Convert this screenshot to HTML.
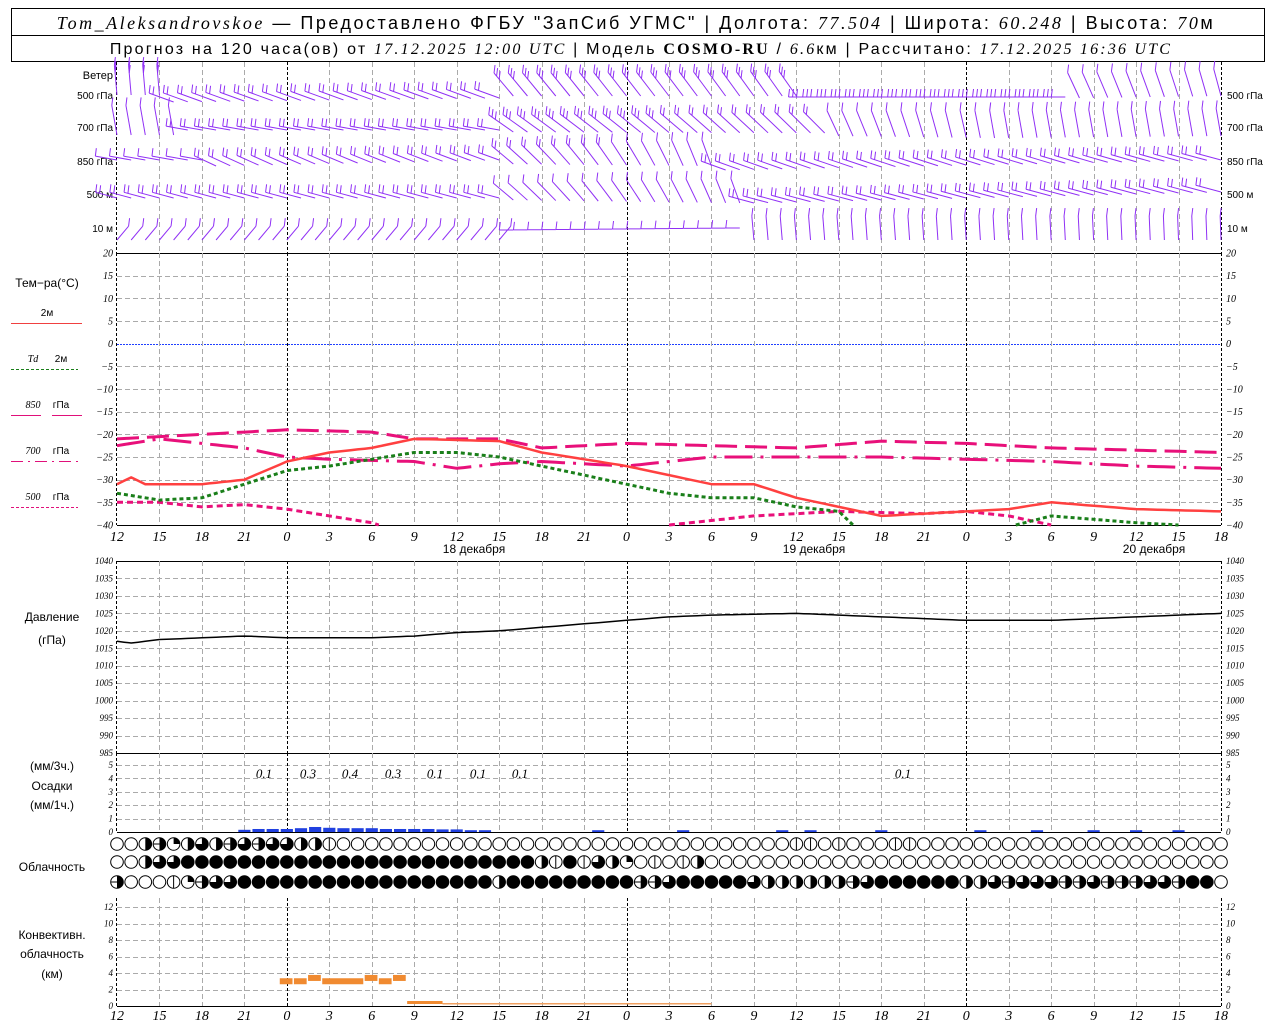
<!DOCTYPE html>
<html><head><meta charset="utf-8">
<style>
html,body{margin:0;padding:0;background:#fff;}
svg{display:block;}
text{font-family:"Liberation Sans",sans-serif;}
.it{font-family:"Liberation Serif",serif;font-style:italic;}
</style></head>
<body>
<svg id="s" width="1280" height="1024" xmlns="http://www.w3.org/2000/svg">
<rect x="0" y="0" width="1280" height="1024" fill="#fff"/>
<rect x="11.5" y="8.5" width="1253" height="53" fill="none" stroke="#000"/>
<line x1="11" y1="35.5" x2="1265" y2="35.5" stroke="#000"/>
<text x="636" y="29" font-size="18" text-anchor="middle" letter-spacing="2.5"><tspan class="it">Tom_Aleksandrovskoe</tspan> — Предоставлено ФГБУ "ЗапСиб УГМС" | Долгота: <tspan class="it">77.504</tspan> | Широта: <tspan class="it">60.248</tspan> | Высота: <tspan class="it">70</tspan>м</text>
<text x="641" y="54" font-size="16" text-anchor="middle" letter-spacing="2.2">Прогноз на 120 часа(ов) от <tspan class="it">17.12.2025 12:00 UTC</tspan> | Модель <tspan font-family="Liberation Serif" font-weight="bold">COSMO-RU</tspan> / <tspan class="it">6.6</tspan>км | Рассчитано: <tspan class="it">17.12.2025 16:36 UTC</tspan></text>
<g id="g"></g>
</svg>
<script>
var NS="http://www.w3.org/2000/svg",G=document.getElementById("g");
function el(t,a,txt){var e=document.createElementNS(NS,t);for(var k in a)e.setAttribute(k,a[k]);if(txt!=null)e.textContent=txt;G.appendChild(e);return e;}
var X0=117,X1=1221,PH=(X1-X0)/78;
function X(h){return X0+PH*h;}
function ln(x1,y1,x2,y2,c,w,d){var a={x1:x1,y1:y1,x2:x2,y2:y2,stroke:c||"#000","stroke-width":w||1};if(d)a["stroke-dasharray"]=d;return el("line",a);}
function tx(x,y,s,sz,anc,cls){var a={x:x,y:y,"font-size":sz||10};if(anc)a["text-anchor"]=anc;if(cls)a["class"]=cls;return el("text",a,s);}
function vgrid(y1,y2){for(var h=0;h<=78;h+=3){var mid=(h%24==12);var x=Math.round(X(h))+0.5;if(h==0||h==78)continue;ln(x,y1,x,y2,mid?"#000":"#aaa",1,mid?"3,2":"5,3");}
ln(X0-0.5,y1,X0-0.5,y2,"#000",1,"3,2");ln(X1+0.5,y1,X1+0.5,y2,"#000",1,"3,2");}
vgrid(62,253);
[["Ветер",79,11],["500 гПа",99,10],["700 гПа",131,10],["850 гПа",165,10],["500 м",198,10],["10  м",232,10]].forEach(function(l,i){tx(113,l[1],l[0],i?10:11,"end");});
[["500 гПа",99],["700 гПа",131],["850 гПа",165],["500 м",198],["10  м",232]].forEach(function(l){tx(1227,l[1],l[0],10);});
var PUR="#9030f5";
function barb(x,y,ang,len,n){var r=ang*Math.PI/180,ex=x+len*Math.cos(r),ey=y+len*Math.sin(r);ln(x,y,ex,ey,PUR,1);
for(var i=0;i<n;i++){var fx=ex-(i*4)*Math.cos(r),fy=ey-(i*4)*Math.sin(r);ln(fx,fy,fx+1,fy-8,PUR,1);}}
function interp(kf,h){for(var i=0;i<kf.length-1;i++){if(h>=kf[i][0]&&h<=kf[i+1][0]){var t=(h-kf[i][0])/((kf[i+1][0]-kf[i][0])||1);return kf[i].map(function(v,j){return v+(kf[i+1][j]-v)*t;});}}return kf[kf.length-1];}
var levels=[
 [[0,-95,30,3,95],[3,-95,30,3,95],[4,200,26,2,102],[27,200,26,2,98],[28,-130,30,3,96],[48,-125,30,3,96],[49,180,22,3,97],[67,180,22,3,97],[68,-115,28,1,98],[78,-105,28,1,96]],
 [[0,-100,30,1,135],[4,-100,30,1,135],[5,190,22,2,130],[27,190,22,2,130],[28,-145,30,3,132],[50,-135,30,2,133],[51,-115,28,1,136],[62,-100,28,1,138],[78,-100,28,1,136]],
 [[0,190,22,1,160],[6,190,22,1,160],[7,205,24,2,166],[27,200,22,2,160],[28,-140,28,2,164],[42,-110,28,1,166],[43,-160,26,2,170],[78,-165,26,2,160]],
 [[0,195,22,2,198],[27,195,22,2,198],[28,-140,26,1,200],[44,-110,26,1,203],[45,-165,26,2,203],[78,-165,26,2,192]],
 [[0,-50,18,1,240],[27,-50,18,1,240],[28,180,14,1,230],[44,180,14,1,228],[45,-95,24,1,240],[78,-92,24,1,240]]];
levels.forEach(function(kf){for(var h=0;h<=78;h++){var p=interp(kf,h);barb(X(h),p[4],p[1],p[2],Math.round(p[3]));}});
var TY=function(v){return 253+(20-v)*(272/60);};
ln(X0,253.5,X1,253.5,"#000");
for(var v=15;v>=-35;v-=5){var y=Math.round(TY(v))+0.5;if(v==0)ln(X0,y,X1,y,"#2040ff",1,"2,1");else ln(X0,y,X1,y,"#aaa",1,"5,3");}
ln(X0,525.5,X1,525.5,"#000");
vgrid(253,525);
for(var v=20;v>=-40;v-=5){var y=TY(v)+3.5;tx(113,y,String(v).replace("-","−"),10,"end","it");tx(1226,y,String(v).replace("-","−"),10,null,"it");}
tx(47,287,"Тем−ра(°C)",12,"middle");
tx(47,316,"2м",10,"middle");ln(11,323.5,82,323.5,"#f04040",1);
tx(33,362,"Td",10,"middle","it");tx(61,362,"2м",10,"middle");ln(11,369.5,78,369.5,"#1a7f1a",1,"3,2");
tx(33,408,"850",10,"middle","it");tx(61,408,"гПа",10,"middle");ln(11,415.5,41,415.5,"#e0107a");ln(52,415.5,82,415.5,"#e0107a");
tx(33,454,"700",10,"middle","it");tx(61,454,"гПа",10,"middle");ln(11,461.5,78,461.5,"#e0107a",1,"12,5,2,5");
tx(33,500,"500",10,"middle","it");tx(61,500,"гПа",10,"middle");ln(11,507.5,78,507.5,"#e0107a",1,"3,2");
function pathFrom(pts,fy,c,w,d){var segs=[],cur=[];for(var h=0;h<=78;h+=0.5){var v=interp(pts,h)[1];if(v<-40.05){if(cur.length)segs.push(cur);cur=[];continue;}cur.push(X(h).toFixed(1)+","+fy(v).toFixed(1));}if(cur.length)segs.push(cur);
var dd=segs.filter(function(s){return s.length>1;}).map(function(s){return "M"+s.join(" L");}).join(" ");var a={d:dd,fill:"none",stroke:c,"stroke-width":w,"stroke-linejoin":"round"};if(d)a["stroke-dasharray"]=d;el("path",a);}
pathFrom([[0,-21],[6,-20],[12,-19],[18,-19.5],[21,-21],[27,-21],[30,-23],[36,-22],[48,-23],[54,-21.5],[60,-22],[66,-23],[78,-24]],TY,"#e8107a",3,"22,8");
pathFrom([[0,-22.5],[3,-21],[9,-23],[12,-25],[15,-25.5],[21,-26],[24,-27.5],[27,-26.5],[30,-26],[36,-27],[42,-25],[54,-25],[60,-25.5],[66,-26],[72,-27],[78,-27.5]],TY,"#e8107a",3,"28,8,3,8");
pathFrom([[0,-35],[3,-35],[6,-36],[9,-35.5],[12,-36.5],[15,-38],[18,-39.5],[19.5,-41],[38,-41],[39,-40],[45,-38],[51,-37],[57,-37.5],[60,-37],[63,-38],[66,-40],[67,-41],[78,-41]],TY,"#e8107a",3,"6,4");
pathFrom([[0,-33],[3,-34.5],[6,-34],[9,-31],[12,-28],[15,-27],[18,-25.5],[21,-24],[24,-24],[27,-25],[30,-27],[33,-29],[36,-31],[39,-33],[42,-34],[45,-34],[48,-36],[51,-37],[52,-40.01],[52.5,-41],[63,-41],[63.5,-40],[66,-38],[72,-39.5],[75,-40],[76,-41],[78,-41]],TY,"#1a7f1a",3,"4,3");
pathFrom([[0,-31],[1,-29.5],[2,-31],[6,-31],[9,-30],[12,-26],[15,-24],[18,-23],[21,-21],[27,-21.5],[30,-24],[36,-27],[42,-31],[45,-31],[48,-34],[51,-36],[54,-38],[60,-37],[63,-36.5],[66,-35],[72,-36.5],[78,-37]],TY,"#ff4040",2.5);
function xlabels(y){for(var h=0;h<=78;h+=3){var hr=(12+h)%24;tx(X(h),y,String(hr),14,"middle","it");}}
xlabels(541);
tx(474,553,"18 декабря",12,"middle");tx(814,553,"19 декабря",12,"middle");tx(1154,553,"20 декабря",12,"middle");
var PY=function(v){return 561+(1040-v)*(192/55);};
ln(X0,561.5,X1,561.5,"#000");
for(var v=1035;v>=990;v-=5){var y=Math.round(PY(v))+0.5;ln(X0,y,X1,y,"#aaa",1,"5,3");}
ln(X0,753.5,X1,753.5,"#000");
vgrid(561,753);
for(var v=1040;v>=985;v-=5){var y=PY(v)+3;tx(113,y,String(v),9,"end","it");tx(1226,y,String(v),9,null,"it");}
tx(52,621,"Давление",12,"middle");tx(52,644,"(гПа)",12,"middle");
pathFrom([[0,1017],[1,1016.5],[3,1017.5],[6,1018],[9,1018.5],[12,1018],[18,1018],[21,1018.5],[24,1019.5],[27,1020],[30,1021],[36,1023],[39,1024],[42,1024.5],[48,1025],[51,1024.5],[54,1024],[60,1023],[66,1023],[72,1024],[78,1025]],PY,"#000",1.5);
var RY=function(v){return 832-v*13.4;};
for(var v=1;v<=5;v++){var y=Math.round(RY(v))+0.5;ln(X0,y,X1,y,"#aaa",1,"5,3");}
ln(X0,832.5,X1,832.5,"#000");
vgrid(753,832);
for(var v=0;v<=5;v++){tx(113,RY(v)+3,String(v),9,"end","it");tx(1226,RY(v)+3,String(v),9,null,"it");}
tx(52,770,"(мм/3ч.)",12,"middle");tx(52,790,"Осадки",12,"middle");tx(52,809,"(мм/1ч.)",12,"middle");
[[264,"0.1"],[308,"0.3"],[350,"0.4"],[393,"0.3"],[435,"0.1"],[478,"0.1"],[520,"0.1"],[903,"0.1"]].forEach(function(a){tx(a[0],778,a[1],13,"middle","it");});
var pr=[[9,0.15],[10,0.25],[11,0.25],[12,0.25],[13,0.35],[14,0.5],[15,0.4],[16,0.35],[17,0.35],[18,0.35],[19,0.25],[20,0.25],[21,0.25],[22,0.25],[23,0.2],[24,0.2],[25,0.1],[26,0.1],[34,0.1],[40,0.1],[47,0.1],[49,0.1],[54,0.1],[61,0.1],[65,0.1],[69,0.1],[72,0.1],[75,0.1]];
pr.forEach(function(p){var hgt=p[1]*13.4*0.6+1;el("rect",{x:X(p[0])-PH/2+1,y:832-hgt,width:PH-2,height:hgt,fill:"#2040e0"});});
tx(52,871,"Облачность",12,"middle");
var rows=[
"002h1232h3h3322v00000000000000000000000000000000vv0v000vv000000000000000000000",
"0023344444444444444444444444442v4v3210v0v2000000000000000000000000000000000000",
"h000v1h334444444444444444442444444444hh3444443222222h3444444223h333hh3hhh33h44"];
var CY=[844,862,882];
rows.forEach(function(r,ri){for(var i=0;i<=78;i++){var c=r[i]||"0",cx=X(i),cy=CY[ri],R=6.3;
if(c=="4"){el("circle",{cx:cx,cy:cy,r:R,fill:"#000",stroke:"#000"});continue;}
el("circle",{cx:cx,cy:cy,r:R,fill:"#fff",stroke:"#000","stroke-width":1});
if(c=="2"||c=="h")el("path",{d:"M"+cx+","+(cy-R)+" A"+R+","+R+" 0 0 1 "+cx+","+(cy+R)+" Z",fill:"#000"});
if(c=="1")el("path",{d:"M"+cx+","+cy+" L"+cx+","+(cy-R)+" A"+R+","+R+" 0 0 1 "+(cx+R)+","+cy+" Z",fill:"#000"});
if(c=="3")el("path",{d:"M"+cx+","+cy+" L"+(cx-R)+","+cy+" A"+R+","+R+" 0 1 0 "+cx+","+(cy-R)+" Z",fill:"#000"});
if(c=="h")ln(cx-R,cy,cx,cy,"#000",1);
if(c=="v")ln(cx,cy-R,cx,cy+R,"#000",1);
}});
var KY=function(v){return 1006-v*8.25;};
for(var v=2;v<=12;v+=2){var y=Math.round(KY(v))+0.5;ln(X0,y,X1,y,"#aaa",1,"5,3");}
ln(X0,1006.5,X1,1006.5,"#000");
vgrid(898,1006);
for(var v=0;v<=12;v+=2){tx(113,KY(v)+3,String(v),9,"end","it");tx(1226,KY(v)+3,String(v),9,null,"it");}
tx(52,939,"Конвективн.",12,"middle");tx(52,958,"облачность",12,"middle");tx(52,978,"(км)",12,"middle");
[[11.5,12.4,3],[12.5,13.4,3],[13.5,14.4,3.4],[14.5,17.4,3],[17.5,18.4,3.4],[18.5,19.4,3],[19.5,20.4,3.4]].forEach(function(b){el("rect",{x:X(b[0]),y:KY(b[2])-3,width:X(b[1])-X(b[0]),height:6,fill:"#f08a30"});});
el("rect",{x:X(20.5),y:1001,width:X(23)-X(20.5),height:3,fill:"#f08a30"});
el("rect",{x:X(23),y:1003,width:X(42)-X(23),height:1.5,fill:"#f0a060"});
xlabels(1020);
</script>
</body></html>
